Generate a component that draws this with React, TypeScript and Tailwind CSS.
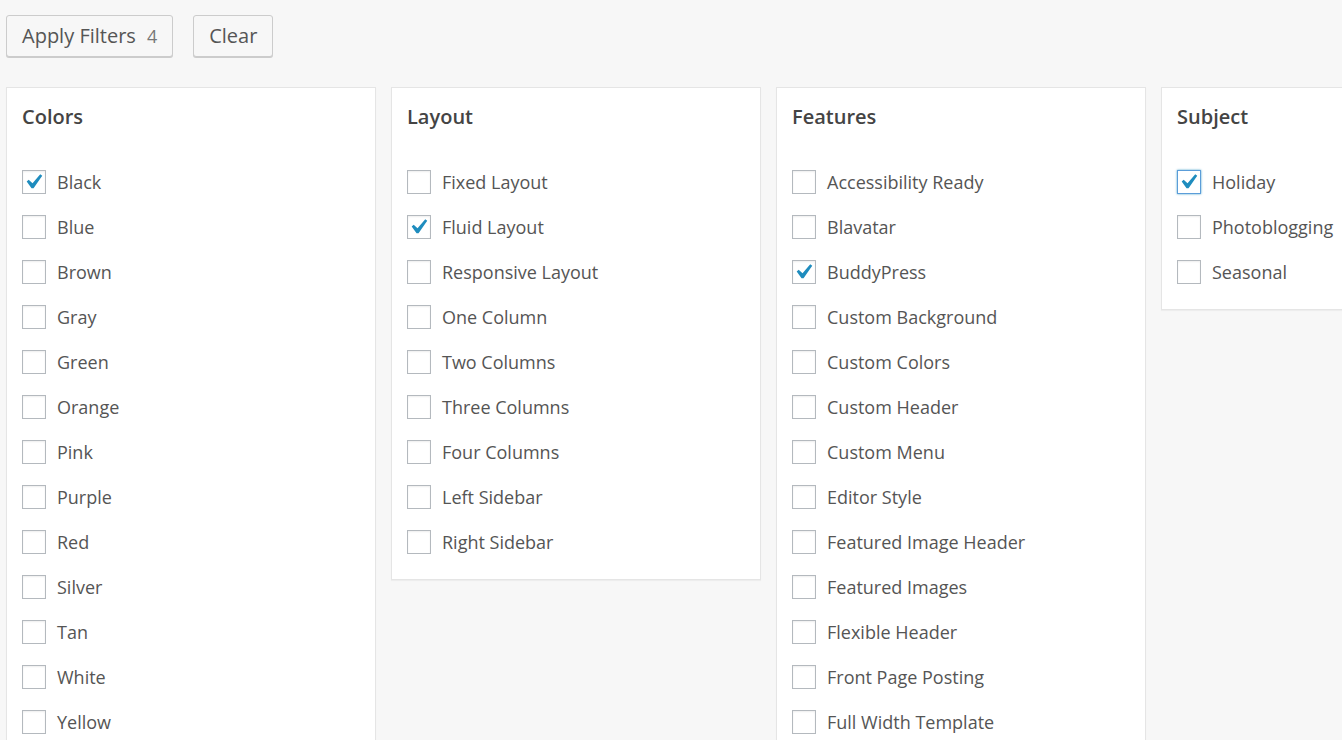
import React from "react";

type Group = { title: string; items: { label: string; checked?: boolean; focus?: boolean }[] };

const groups: Group[] = [
	{
		title: "Colors",
		items: [
			{ label: "Black", checked: true },
			{ label: "Blue" },
			{ label: "Brown" },
			{ label: "Gray" },
			{ label: "Green" },
			{ label: "Orange" },
			{ label: "Pink" },
			{ label: "Purple" },
			{ label: "Red" },
			{ label: "Silver" },
			{ label: "Tan" },
			{ label: "White" },
			{ label: "Yellow" },
		],
	},
	{
		title: "Layout",
		items: [
			{ label: "Fixed Layout" },
			{ label: "Fluid Layout", checked: true },
			{ label: "Responsive Layout" },
			{ label: "One Column" },
			{ label: "Two Columns" },
			{ label: "Three Columns" },
			{ label: "Four Columns" },
			{ label: "Left Sidebar" },
			{ label: "Right Sidebar" },
		],
	},
	{
		title: "Features",
		items: [
			{ label: "Accessibility Ready" },
			{ label: "Blavatar" },
			{ label: "BuddyPress", checked: true },
			{ label: "Custom Background" },
			{ label: "Custom Colors" },
			{ label: "Custom Header" },
			{ label: "Custom Menu" },
			{ label: "Editor Style" },
			{ label: "Featured Image Header" },
			{ label: "Featured Images" },
			{ label: "Flexible Header" },
			{ label: "Front Page Posting" },
			{ label: "Full Width Template" },
		],
	},
	{
		title: "Subject",
		items: [
			{ label: "Holiday", checked: true, focus: true },
			{ label: "Photoblogging" },
			{ label: "Seasonal" },
		],
	},
];

function Check({ checked, focus }: { checked?: boolean; focus?: boolean }) {
	return (
		<span
			className={
				"relative block w-6 h-6 shrink-0 bg-white border " +
				(focus
					? "border-[#5b9dd9] shadow-[0_0_2px_rgba(30,140,190,0.8)]"
					: "border-[#b4b9be] shadow-[inset_0_1px_2px_rgba(0,0,0,0.07)]")
			}
		>
			{checked && (
				<svg
					viewBox="0 0 20 20"
					className="absolute w-[30px] h-[30px] left-[-5px] top-[-4px]"
				>
					<path fill="#1e8cbe" d="M14.83 4.89l1.34.94-5.81 8.38H9.02L5.78 9.67l1.34-1.25 2.57 2.4z" />
				</svg>
			)}
		</span>
	);
}

export default function App() {
	return (
		<div className="h-[740px] bg-[#f7f7f7] overflow-hidden font-['Open_Sans',sans-serif] text-[#555]">
			<div className="flex gap-5 pt-[15px] pl-[6px]">
				<button className="h-[42px] pl-[15px] pr-[15px] rounded-[3px] border border-[#ccc] bg-[#f7f7f7] shadow-[0_1px_0_#ccc] text-[20px] text-[#555] flex items-center">
					Apply Filters
					<span className="ml-[11px] text-[18px] text-[#777]">4</span>
				</button>
				<button className="h-[42px] px-[15px] rounded-[3px] border border-[#ccc] bg-[#f7f7f7] shadow-[0_1px_0_#ccc] text-[20px] text-[#555]">
					Clear
				</button>
			</div>
			<div className="flex items-start gap-[15px] pl-[6px] mt-[30px]">
				{groups.map((g) => (
					<div
						key={g.title}
						className="w-[370px] shrink-0 bg-white border border-[#e5e5e5] shadow-[0_1px_1px_rgba(0,0,0,0.04)] px-[15px] pt-[14px] pb-[25px]"
					>
						<h4 className="text-[20px] leading-[30px] font-semibold text-[#444]">{g.title}</h4>
						<div className="mt-[38px] flex flex-col gap-[21px]">
							{g.items.map((it) => (
								<label key={it.label} className="flex items-center gap-[11px] h-6">
									<Check checked={it.checked} focus={it.focus} />
									<span className="text-[18px] leading-6 whitespace-nowrap">{it.label}</span>
								</label>
							))}
						</div>
					</div>
				))}
			</div>
		</div>
	);
}
